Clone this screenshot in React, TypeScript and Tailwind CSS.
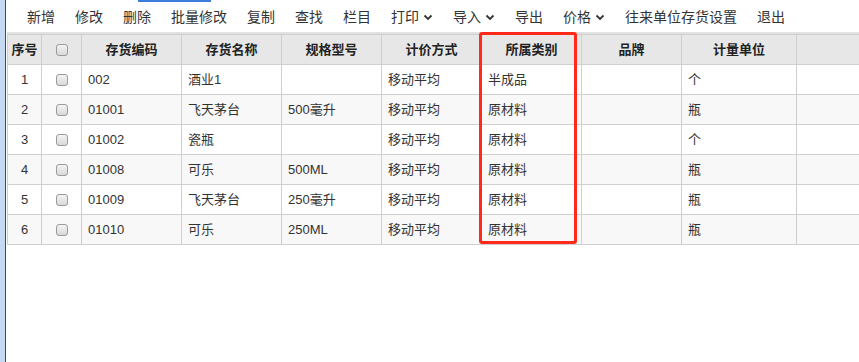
import React from 'react';

const menu = [
    { label: '新增' },
    { label: '修改' },
    { label: '删除' },
    { label: '批量修改' },
    { label: '复制' },
    { label: '查找' },
    { label: '栏目' },
    { label: '打印', drop: true },
    { label: '导入', drop: true },
    { label: '导出' },
    { label: '价格', drop: true },
    { label: '往来单位存货设置' },
    { label: '退出' },
];

const rows = [
    ['1', '002', '酒业1', '', '移动平均', '半成品', '', '个'],
    ['2', '01001', '飞天茅台', '500毫升', '移动平均', '原材料', '', '瓶'],
    ['3', '01002', '瓷瓶', '', '移动平均', '原材料', '', '个'],
    ['4', '01008', '可乐', '500ML', '移动平均', '原材料', '', '瓶'],
    ['5', '01009', '飞天茅台', '250毫升', '移动平均', '原材料', '', '瓶'],
    ['6', '01010', '可乐', '250ML', '移动平均', '原材料', '', '瓶'],
];

function Chevron() {
    return (
        <svg width="10" height="8" viewBox="0 0 10 8" className="ml-[4px]">
            <path d="M1.5 2.5 L5 6 L8.5 2.5" fill="none" stroke="#333" strokeWidth="1.8" />
        </svg>
    );
}

function Check() {
    return (
        <span className="block w-[12px] h-[12px] rounded-[3px] border border-[#9a9a9a] bg-gradient-to-b from-[#f4f4f4] to-[#d9d9d9]" />
    );
}

const cell = 'h-full border-r border-[#cfcfcf] flex items-center shrink-0';

export default function App() {
    return (
        <div
            className="w-[859px] h-[362px] bg-white flex overflow-hidden text-[#333]"
            style={{ fontFamily: '"Liberation Sans", "Noto Sans CJK SC", sans-serif' }}
        >
            <div className="w-[6px] h-full bg-[#c5d9f3] border-r border-[#1d4ea6] shrink-0" />
            <div className="relative flex-1 pl-px min-w-0">
                <div className="h-[2px] flex">
                    <div className="ml-[131px] w-[73px] bg-[#3b7ddd]" />
                </div>
                <div className="h-[32px] flex items-center pl-[20px] gap-[20px] text-[14px] whitespace-nowrap border-b-2 border-[#e2e2e2]">
                    {menu.map((m) => (
                        <span key={m.label} className="flex items-center">
                            {m.label}
                            {m.drop && <Chevron />}
                        </span>
                    ))}
                </div>
                <div className="w-[1000px] border-l border-t border-[#cfcfcf] text-[13px]">
                    <div className="h-[30px] flex bg-[#e7e7e7] border-b border-[#cfcfcf] font-bold text-[#222]">
                        <div className={`${cell} w-[34px] justify-center`}>序号</div>
                        <div className={`${cell} w-[40px] justify-center`}><Check /></div>
                        <div className={`${cell} w-[100px] justify-center`}>存货编码</div>
                        <div className={`${cell} w-[100px] justify-center`}>存货名称</div>
                        <div className={`${cell} w-[100px] justify-center`}>规格型号</div>
                        <div className={`${cell} w-[100px] justify-center`}>计价方式</div>
                        <div className={`${cell} w-[100px] justify-center`}>所属类别</div>
                        <div className={`${cell} w-[100px] justify-center`}>品牌</div>
                        <div className={`${cell} w-[115px] justify-center`}>计量单位</div>
                        <div className={`${cell} w-[120px]`} />
                    </div>
                    {rows.map((r, i) => (
                        <div
                            key={r[0]}
                            className={`h-[30px] flex border-b border-[#cfcfcf] ${i % 2 ? 'bg-[#f8f8f8]' : 'bg-white'}`}
                        >
                            <div className={`${cell} w-[34px] justify-center`}>{r[0]}</div>
                            <div className={`${cell} w-[40px] justify-center`}><Check /></div>
                            <div className={`${cell} w-[100px] pl-[6px]`}>{r[1]}</div>
                            <div className={`${cell} w-[100px] pl-[6px]`}>{r[2]}</div>
                            <div className={`${cell} w-[100px] pl-[6px]`}>{r[3]}</div>
                            <div className={`${cell} w-[100px] pl-[6px]`}>{r[4]}</div>
                            <div className={`${cell} w-[100px] pl-[6px]`}>{r[5]}</div>
                            <div className={`${cell} w-[100px] pl-[6px]`}>{r[6]}</div>
                            <div className={`${cell} w-[115px] pl-[6px]`}>{r[7]}</div>
                            <div className={`${cell} w-[120px]`} />
                        </div>
                    ))}
                </div>
                {/* highlight box */}
                <div className="absolute left-[473px] top-[32px] w-[98px] h-[212px] border-[3px] border-[#ff2a1a] rounded-[3px] pointer-events-none" />
            </div>
        </div>
    );
}
